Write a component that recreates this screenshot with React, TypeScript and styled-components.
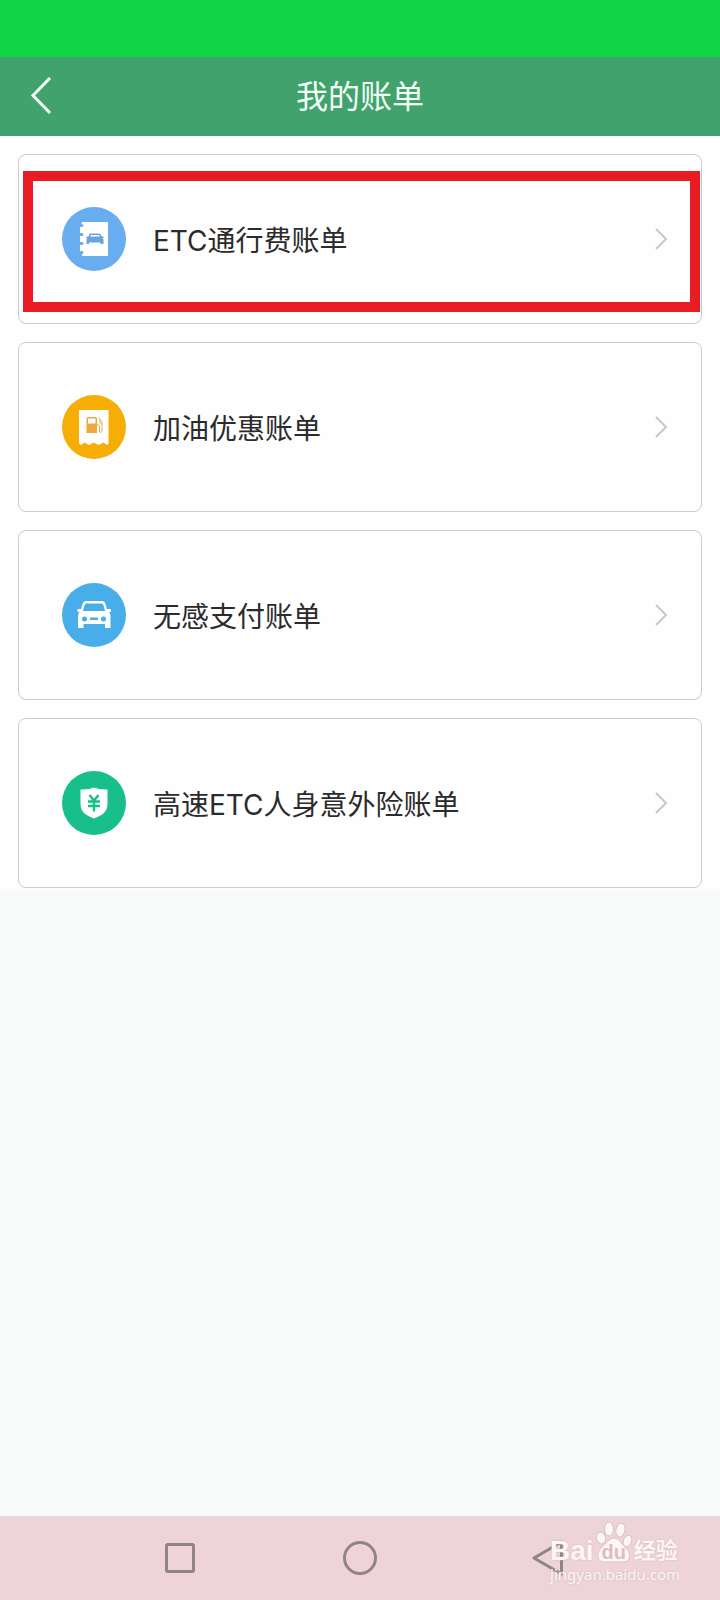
import React from "react";
import styled, { createGlobalStyle } from "styled-components";

const GlobalStyle = createGlobalStyle`
  * { box-sizing: border-box; }
  body {
    margin: 0;
    background: #f9fbfb;
    font-family: Inter, "Noto Sans CJK SC", sans-serif;
    color: #2b2b2b;
  }
`;

const Page = styled.div`
  min-height: 100vh;
  display: flex;
  flex-direction: column;
`;

const StatusBar = styled.div`
  height: 57px;
  background: #11d447;
`;

const Header = styled.header`
  height: 79px;
  display: grid;
  grid-template-columns: 82px 1fr 82px;
  align-items: center;
  background: #42a26d;
  color: #f2fff7;
`;

const BackButton = styled.button`
  height: 79px;
  padding: 0;
  border: 0;
  background: none;
  color: inherit;
  display: flex;
  align-items: center;
  justify-content: center;
`;

const Title = styled.h1`
  margin: 0;
  font-size: 32px;
  line-height: 40px;
  font-weight: 400;
  text-align: center;
`;

const Main = styled.main`
  flex: 1;
`;

const BillList = styled.ul`
  margin: 0;
  padding: 18px 18px 1px;
  list-style: none;
  display: flex;
  flex-direction: column;
  gap: 18px;
  background: #fefefe;
`;

const BillLink = styled.a`
  position: relative;
  height: 170px;
  padding: 0 32px 0 43px;
  display: flex;
  align-items: center;
  gap: 27px;
  border: 1px solid #c9cbcc;
  border-radius: 8px;
  background: #fefefe;
  color: inherit;
  text-decoration: none;
`;

const BillName = styled.span`
  flex: 1;
  padding-top: 4px;
  font-size: 28px;
  line-height: 40px;
`;

const Highlight = styled.span`
  position: absolute;
  top: 16px;
  right: 1px;
  bottom: 11px;
  left: 4px;
  border: 10px solid #e91c24;
  pointer-events: none;
`;

const SystemNav = styled.nav`
  position: relative;
  height: 84px;
  padding: 0 90px;
  display: grid;
  grid-template-columns: repeat(3, 1fr);
  background: #eed3d9;
`;

const NavButton = styled.button`
  padding: 0;
  border: 0;
  background: none;
  color: #918487;
  display: flex;
  align-items: center;
  justify-content: center;
`;

const Watermark = styled.div`
  position: absolute;
  right: 40px;
  bottom: 15px;
  color: #fdf6f7;
  text-shadow: 0 0 2px #cdb5bb;
`;

const WatermarkLogo = styled.div`
  display: flex;
  align-items: flex-end;
  gap: 2px;
  font-family: "Liberation Sans", "Noto Sans CJK SC", sans-serif;
  font-weight: 700;
`;

const Bai = styled.span`
  font-size: 28px;
  line-height: 24px;
`;

const Paw = styled.span`
  position: relative;
  width: 36px;
  height: 42px;
`;

const Du = styled.span`
  position: absolute;
  right: 0;
  bottom: 0;
  left: 0;
  font-size: 20px;
  line-height: 22px;
  text-align: center;
  color: #dcbcc5;
  text-shadow: none;
`;

const Jingyan = styled.span`
  font-size: 22px;
  line-height: 24px;
`;

const WatermarkUrl = styled.div`
  font-family: "Noto Sans", sans-serif;
  font-size: 15px;
  line-height: 22px;
`;

const TollIcon = () => (
  <svg width="64" height="64" viewBox="0 0 64 64" aria-hidden="true">
    <circle cx="32" cy="32" r="32" fill="#67adf0" />
    <path d="M20 15H46V49H20V47L18 45V18L20 16Z" fill="#fff" />
    <path d="M17 18.500h3M17 27.500h3M17 36.500h3M17 45.500h3" stroke="#67adf0" strokeWidth="3" strokeLinecap="round" />
    <path
      fillRule="evenodd"
      d="M28 26.500H37.500Q38.500 26.500 39 28L39.600 29.500H41.500V31H40.600Q41.500 31.800 41.500 33V37H38.500V35.500H27V37H24.500V33Q24.500 31.800 25.400 31H24.500V29.500H26.400L27 28Q27.500 26.500 28 26.500ZM28.800 28L28.300 29.500H37.800L37.200 28Z"
      fill="#67a4dd"
    />
  </svg>
);

const FuelIcon = () => (
  <svg width="64" height="64" viewBox="0 0 64 64" aria-hidden="true">
    <circle cx="32" cy="32" r="32" fill="#f6ae06" />
    <path d="M17 15H46.500V48.500L45 50L41.500 47.500L36.500 50L32 47.500L27 50L22.500 47.500L19 50L17 48.500Z" fill="#fff" />
    <path fillRule="evenodd" d="M26 22H33.500Q35 22 35 23.500V38H24.500V23.500Q24.500 22 26 22ZM26 23.500V28.500H33.500V23.500Z" fill="#e9a93c" />
    <path d="M36.500 22.500L40 26.500V36.500Q39 38 37.500 37V30.500L35 29.500M38 24V28L40 29.500" fill="none" stroke="#e9b04c" strokeWidth="1" />
  </svg>
);

const CarIcon = () => (
  <svg width="64" height="64" viewBox="0 0 64 64" aria-hidden="true">
    <circle cx="32" cy="32" r="32" fill="#48aeea" />
    <path
      fillRule="evenodd"
      d="M24 18H40Q42.500 18 43.500 21L45 26H49V29H47Q48.500 31 48.500 33V45H43V41H21.500V45H16V33Q16 31 17.500 29H15.500V26H19L20.500 21Q21.500 18 24 18ZM24.500 20.500Q23 20.500 22.600 22L21 28H43L41.400 22Q41 20.500 39.500 20.500Z"
      fill="#fff"
    />
    <circle cx="22.500" cy="36" r="2.500" fill="#48aeea" />
    <circle cx="41.500" cy="36" r="2.500" fill="#48aeea" />
    <path d="M28 34.500H36V37H28Z" fill="#48aeea" />
  </svg>
);

const ShieldIcon = () => (
  <svg width="64" height="64" viewBox="0 0 64 64" aria-hidden="true">
    <circle cx="32" cy="32" r="32" fill="#18bf8b" />
    <path d="M32 16.500Q38 19 45.500 18.500V33C45.500 41 40 44.500 32 47.500C24 44.500 18.500 41 18.500 33V18.500Q26 19 32 16.500Z" fill="#fff" />
    <path d="M27.500 24L32 29.500L36.500 24M26 30.500H38M26 35H38M32 29.500V40.500" fill="none" stroke="#18bf8b" strokeWidth="2.400" />
  </svg>
);

const Chevron = () => (
  <svg width="14" height="24" viewBox="0 0 14 24" fill="none" aria-hidden="true">
    <path d="M1 2L11 12L1 22" stroke="#c8c8c8" strokeWidth="2" />
  </svg>
);

const bills = [
  { name: "ETC通行费账单", Icon: TollIcon, highlighted: true },
  { name: "加油优惠账单", Icon: FuelIcon },
  { name: "无感支付账单", Icon: CarIcon },
  { name: "高速ETC人身意外险账单", Icon: ShieldIcon },
];

export default function App() {
  return (
    <Page>
      <GlobalStyle />
      <StatusBar />
      <Header>
        <BackButton type="button" aria-label="返回">
          <svg width="22" height="40" viewBox="0 0 22 40" fill="none" aria-hidden="true">
            <path d="M20 1L3 18.500L20 36" stroke="currentColor" strokeWidth="3" />
          </svg>
        </BackButton>
        <Title>我的账单</Title>
      </Header>
      <Main>
        <BillList>
          {bills.map(({ name, Icon, highlighted }) => (
            <li key={name}>
              <BillLink href="#">
                <Icon />
                <BillName>{name}</BillName>
                <Chevron />
                {highlighted && <Highlight />}
              </BillLink>
            </li>
          ))}
        </BillList>
      </Main>
      <SystemNav>
        <NavButton type="button" aria-label="最近任务">
          <svg width="30" height="30" viewBox="0 0 30 30" fill="none" aria-hidden="true">
            <rect x="1.500" y="1.500" width="27" height="27" rx="1.500" stroke="currentColor" strokeWidth="3" />
          </svg>
        </NavButton>
        <NavButton type="button" aria-label="主屏幕">
          <svg width="34" height="34" viewBox="0 0 34 34" fill="none" aria-hidden="true">
            <circle cx="17" cy="17" r="15.500" stroke="currentColor" strokeWidth="3" />
          </svg>
        </NavButton>
        <NavButton type="button" aria-label="返回上一页">
          <svg width="48" height="38" viewBox="0 0 48 38" fill="none" aria-hidden="true">
            <path d="M45.500 3V35L18 19Z" stroke="currentColor" strokeWidth="3" strokeLinejoin="round" />
          </svg>
        </NavButton>
        <Watermark>
          <WatermarkLogo>
            <Bai>Bai</Bai>
            <Paw>
              <svg width="36" height="42" viewBox="0 0 36 42" fill="#fdf6f7" stroke="#d9c0c6" strokeWidth="1" aria-hidden="true">
                <ellipse cx="5" cy="17" rx="4.500" ry="6" transform="rotate(-10 5 17)" />
                <ellipse cx="13" cy="8" rx="4.500" ry="7" />
                <ellipse cx="24.500" cy="9" rx="4.500" ry="7" transform="rotate(12 24.500 9)" />
                <ellipse cx="31.500" cy="20" rx="4" ry="6" transform="rotate(20 31.500 20)" />
                <path d="M18 17C23 17 25 22 29 26C36 32 35 41 27 41H9C0 41 0 32 6 26C11 22 13 17 18 17Z" />
              </svg>
              <Du>du</Du>
            </Paw>
            <Jingyan>经验</Jingyan>
          </WatermarkLogo>
          <WatermarkUrl>jingyan.baidu.com</WatermarkUrl>
        </Watermark>
      </SystemNav>
    </Page>
  );
}
